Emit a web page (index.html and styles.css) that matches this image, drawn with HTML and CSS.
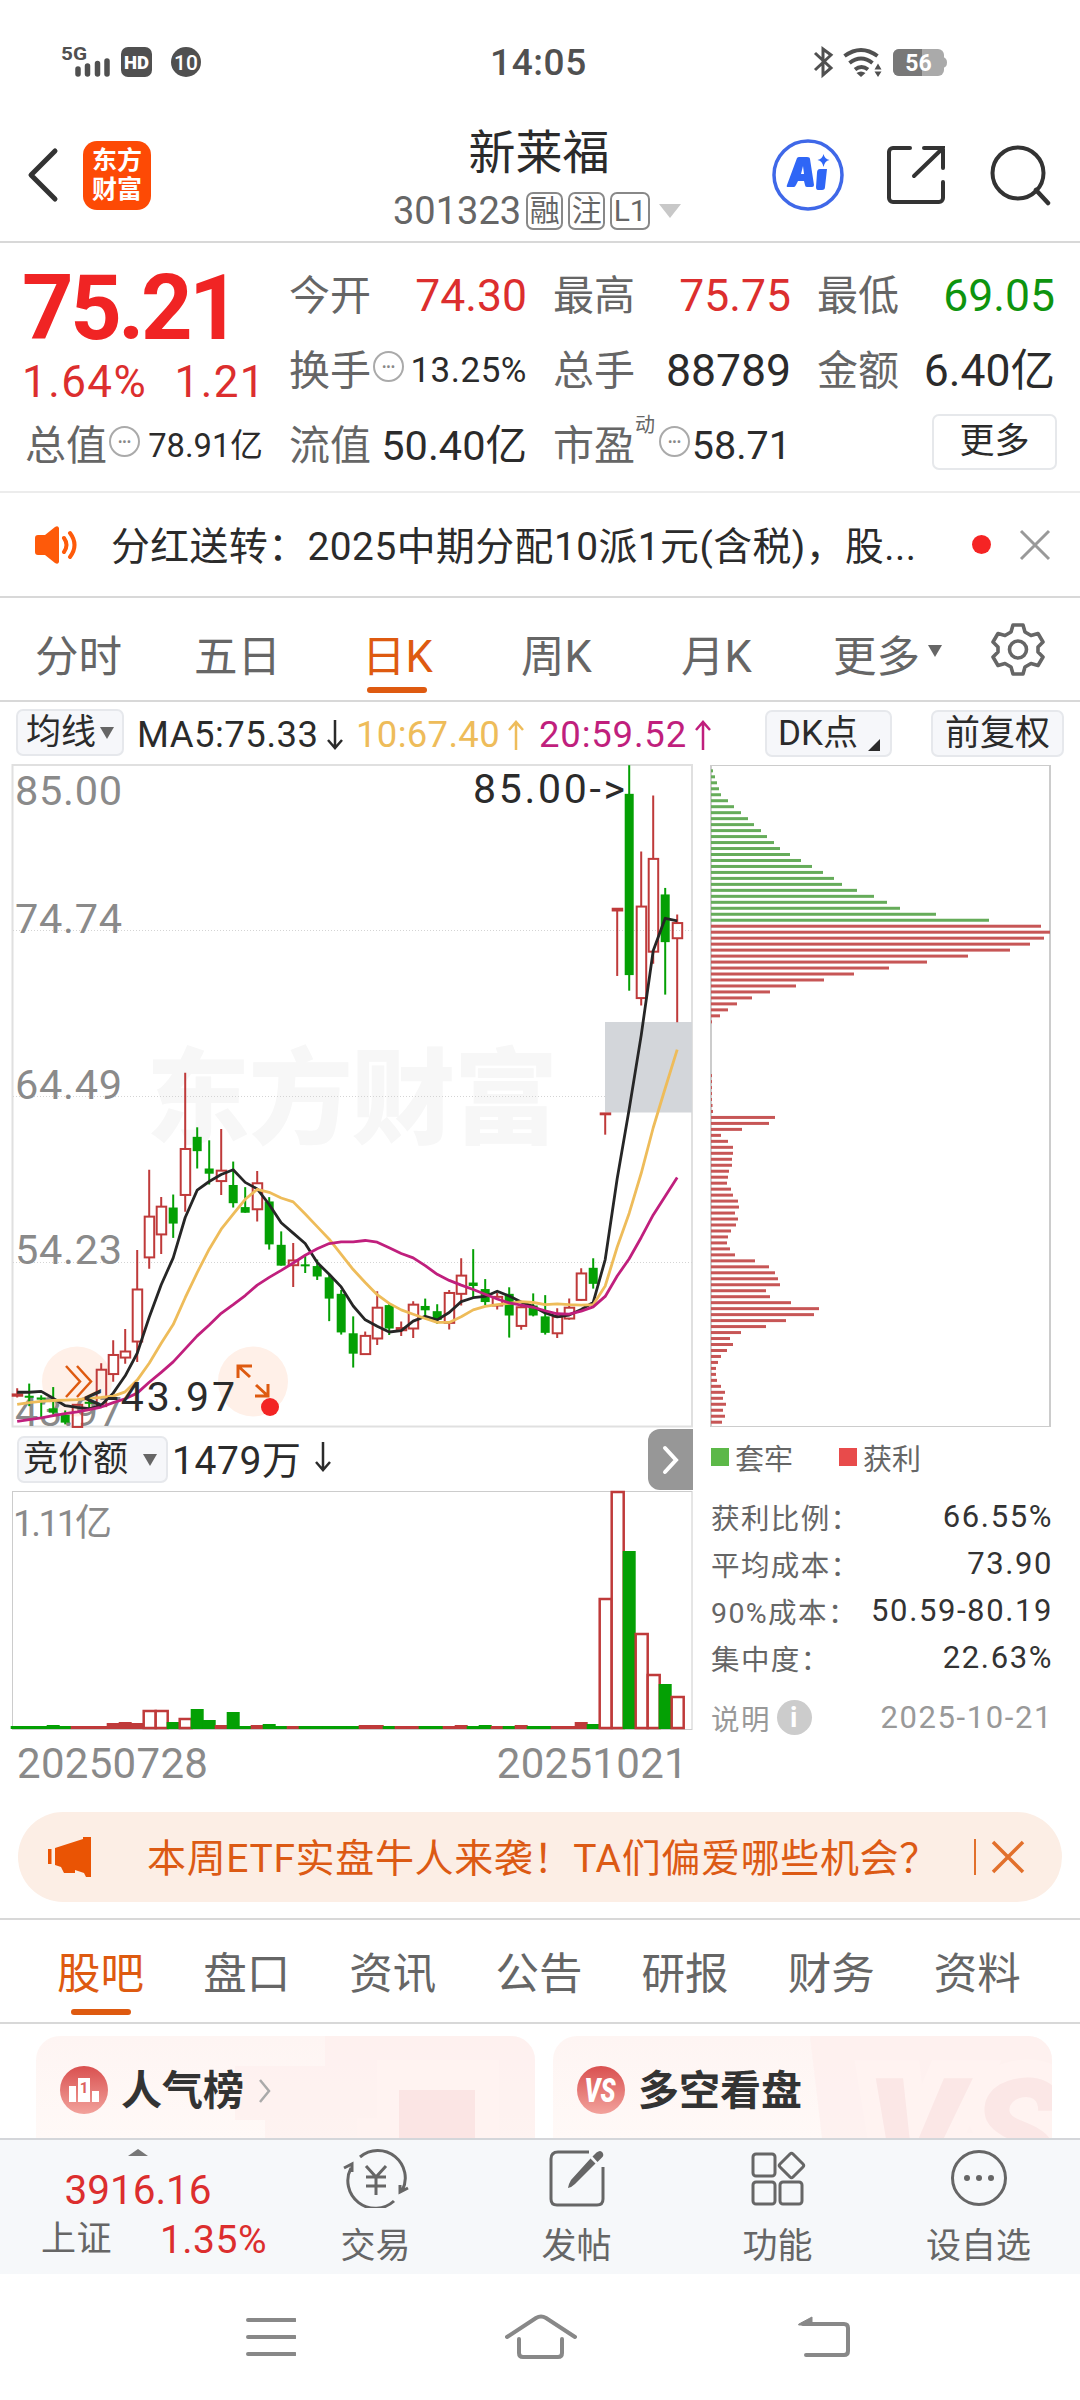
FILE: index.html
```
<!DOCTYPE html>
<html lang="zh-CN">
<head>
    <meta charset="UTF-8">
    <meta name="viewport" content="width=device-width, initial-scale=1.0">
    <title>新莱福 301323</title>
    <link rel="stylesheet" href="styles.css">
</head>
<body>
    <div class="status-bar">
        <svg class="status-left" width="150" height="40" viewBox="58 40 150 40">
            <text x="61" y="60" font-size="19" font-weight="700" textLength="26" lengthAdjust="spacingAndGlyphs">5G</text>
            <path d="M78 69v5M87.500 66v8M97.500 63.500v10.500M107 61v13" stroke="#505050" stroke-width="5.500" stroke-linecap="round"/>
            <rect x="121" y="47" width="31" height="30" rx="7"/>
            <text x="136.500" y="69" class="inv" font-size="19" font-weight="900" text-anchor="middle" textLength="25" lengthAdjust="spacingAndGlyphs">HD</text>
            <circle cx="186" cy="62" r="15"/>
            <text x="186" y="69.500" class="inv" font-size="21" font-weight="500" text-anchor="middle">10</text>
        </svg>
        <span class="clock">14:05</span>
        <svg class="status-right" width="140" height="40" viewBox="811 40 140 40">
            <path d="M815 53l16 15-8 7V49l8 6-16 15" fill="none" stroke="#505050" stroke-width="3"/>
            <path d="M844.500 56q16.500-12 33 0M849.500 63q11.500-9 23 0M855 69.500q6.500-5 13 0" fill="none" stroke="#505050" stroke-width="4"/>
            <path d="M856.500 73q4.500-3 9 0l-4.500 4zM874.500 69.500l3.500-6 3.500 6zM874.500 71.500h7l-3.500 5.500z"/>
            <rect x="893" y="49" width="51" height="27" rx="6" fill="#aaa"/>
            <path d="M922 49h-23a6 6 0 0 0-6 6v15a6 6 0 0 0 6 6h23z" fill="#787878"/>
            <path d="M943 57q4 1 4 5.500t-4 5.500z" fill="#aaa"/>
            <text x="918.500" y="71" class="inv" font-size="23" font-weight="700" text-anchor="middle">56</text>
        </svg>
    </div>

    <div class="header">
        <div class="header-left">
            <svg width="32" height="56" viewBox="0 0 32 56"><path d="M28 4L4 28l24 24" fill="none" stroke="#333" stroke-width="5" stroke-linecap="round" stroke-linejoin="round"/></svg>
            <div class="app-logo">东方<br>财富</div>
        </div>
        <div class="stock-title">
            <div class="stock-name">新莱福</div>
            <div class="stock-code">301323<span class="mark">融</span><span class="mark">注</span><span class="mark wide">L1</span><i class="drop"></i></div>
        </div>
        <div class="header-right">
            <svg width="74" height="74" viewBox="0 0 74 74">
                <circle cx="37" cy="37" r="34" fill="none" stroke="#3f68e8" stroke-width="3.500"/>
                <path d="M26 20q1-1 2-1h8q3 0 3 2l4 26q0 2-2 2h-5q-2 0-2-2l-1-4h-6l-2 4q-1 2-2 2h-6q-2 0-1-2zM30 36h3l-1-8zM49 31h7l-2 18q0 3-3 3h-4q-2 0-2-3l1-14q0-4 3-4zM52.500 16q1 5 6 6-5 1-6 7-1-6-6-7 5-1 6-6z" fill="#2f66f6"/>
            </svg>
            <svg width="62" height="62" viewBox="0 0 62 62"><path d="M24 4H7a4 4 0 0 0-4 4v46a4 4 0 0 0 4 4h46a4 4 0 0 0 4-4V38M38 4h19v20M57 4L28 32" fill="none" stroke="#333" stroke-width="4" stroke-linecap="round"/></svg>
            <svg width="62" height="64" viewBox="0 0 62 64"><circle cx="29" cy="30" r="25.500" fill="none" stroke="#333" stroke-width="4"/><path d="M47 47l12 13" stroke="#333" stroke-width="4.500" stroke-linecap="round"/></svg>
        </div>
    </div>

    <div class="quote">
        <div class="price-box">
            <div class="price">75.21</div>
            <div class="change"><span>1.64%</span><span>1.21</span></div>
        </div>
        <div class="cell"><label>今开</label><b class="up">74.30</b></div>
        <div class="cell"><label>最高</label><b class="up">75.75</b></div>
        <div class="cell"><label>最低</label><b class="down">69.05</b></div>
        <div class="cell"><label>换手</label><i class="dots">•••</i><b class="small wide">13.25%</b></div>
        <div class="cell"><label>总手</label><b>88789</b></div>
        <div class="cell"><label>金额</label><b>6.40亿</b></div>
        <div class="cell"><label>总值</label><i class="dots">•••</i><b class="small">78.91亿</b></div>
        <div class="cell"><label>流值</label><b class="mid">50.40亿</b></div>
        <div class="cell"><label>市盈</label><sup>动</sup><i class="dots">•••</i><b class="pe">58.71</b></div>
        <div class="cell"><button class="more">更多</button></div>
    </div>

    <div class="notice">
        <svg width="46" height="38" viewBox="0 0 46 38">
            <path d="M2 12q0-3 3-3h7L22 1q3-2 4 1v34q-1 3-4 1l-10-8H5q-3 0-3-3z" fill="#fe5a0a"/>
            <path d="M31 12q5 7 0 14M37 7q9 12 0 24" fill="none" stroke="#fe5a0a" stroke-width="4" stroke-linecap="round"/>
        </svg>
        <span class="notice-text">分红送转：2025中期分配10派1元(含税)，股...</span>
        <i class="red-dot"></i>
        <svg width="32" height="32" viewBox="0 0 32 32"><path d="M2 2l28 28M30 2L2 30" stroke="#999" stroke-width="3"/></svg>
    </div>

    <div class="period-tabs">
        <span>分时</span><span>五日</span><span class="active">日K</span><span>周K</span><span>月K</span><span>更多<i class="tri"></i></span>
        <svg class="gear" width="54" height="54" viewBox="0 0 54 54" fill="none" stroke="#666" stroke-width="3.600" stroke-linejoin="round">
            <path d="M22 3h10l2 7 6 3.500 7-2 5 8.500-5 5v5l5 5-5 8.500-7-2-6 3.500-2 7H22l-2-7-6-3.500-7 2L2 35l5-5v-5l-5-5 5-8.500 7 2 6-3.500z"/>
            <circle cx="27" cy="27.500" r="8.500"/>
        </svg>
    </div>

    <div class="indicators">
        <span class="chip ma-btn">均线<i class="tri"></i></span>
        <span class="ma5">MA5:75.33<svg class="arrow" viewBox="0 0 18 32"><path d="M9 1v28M2 21l7 8 7-8"/></svg></span>
        <span class="ma10">10:67.40<svg class="arrow" viewBox="0 0 18 32"><path d="M9 31V3M2 11l7-8 7 8"/></svg></span>
        <span class="ma20">20:59.52<svg class="arrow" viewBox="0 0 18 32"><path d="M9 31V3M2 11l7-8 7 8"/></svg></span>
        <span class="chip dk-btn">DK点<i class="corner"></i></span>
        <span class="chip fq-btn">前复权</span>
    </div>

    <div class="charts">
        <div class="chart-main">
            <svg id="kline" width="700" height="668" viewBox="0 760 700 668"></svg>
            <div class="vol-head">
                <span class="chip vol-btn">竞价额<i class="tri"></i></span>
                <span class="vol-value">1479万<svg class="arrow" viewBox="0 0 18 32"><path d="M9 1v28M2 21l7 8 7-8"/></svg></span>
                <span class="next"><svg width="20" height="32" viewBox="0 0 20 32"><path d="M4 4l11 12L4 28" fill="none" stroke="#fff" stroke-width="4" stroke-linecap="round"/></svg></span>
            </div>
            <svg id="volume" width="700" height="242" viewBox="0 1490 700 242"></svg>
            <div class="dates"><span>20250728</span><span>20251021</span></div>
        </div>
        <div class="chart-side">
            <svg id="chips" width="352" height="668" viewBox="700 760 352 668"></svg>
            <div class="legend"><i class="sq green"></i>套牢<i class="sq red"></i>获利</div>
            <div class="stats">
                <div class="stat"><span>获利比例：</span><b>66.55%</b></div>
                <div class="stat"><span>平均成本：</span><b>73.90</b></div>
                <div class="stat"><span>90%成本：</span><b>50.59-80.19</b></div>
                <div class="stat"><span>集中度：</span><b>22.63%</b></div>
                <div class="stat note"><span>说明<i class="info">i</i></span><b>2025-10-21</b></div>
            </div>
        </div>
    </div>

    <div class="banner">
        <svg width="46" height="42" viewBox="0 0 46 42"><path d="M1 13h3.500v15H1zM8 12L36 3V1h8v40h-5l-2-4-9-3v3h-11l-3-6-6-2z" fill="#ea5404"/></svg>
        <span class="banner-text">本周ETF实盘牛人来袭！TA们偏爱哪些机会？</span>
        <i class="bar"></i>
        <svg width="34" height="34" viewBox="0 0 34 34"><path d="M2 2l30 30M32 2L2 32" stroke="#e2702c" stroke-width="3.500"/></svg>
    </div>

    <div class="info-tabs">
        <span class="active">股吧</span><span>盘口</span><span>资讯</span><span>公告</span><span>研报</span><span>财务</span><span>资料</span>
    </div>

    <div class="cards">
        <div class="card">
            <svg class="card-bg" width="300" height="102" viewBox="0 0 300 102"><path d="M90 0h210v102H30V84H0V30h90z" fill="#feefed" opacity=".6"/><path d="M142 24h122v78H122V82h20z" fill="#fff3f1"/><path d="M164 54h76v48h-76z" fill="#fbe5e4"/></svg>
            <svg width="48" height="48" viewBox="0 0 48 48">
                <defs><linearGradient id="badge" x2="0" y2="1"><stop offset="0" stop-color="#d9504f"/><stop offset="1" stop-color="#f2a29c"/></linearGradient></defs>
                <circle cx="24" cy="24" r="24" fill="url(#badge)"/>
                <path d="M9 20h7v16H9zM18 12h12v24H18zM32 25h7v11h-7z" fill="#fff"/>
                <text x="24" y="27" font-size="15" font-weight="700" fill="#dd6260" text-anchor="middle">1</text>
            </svg>
            <span>人气榜</span>
            <svg width="16" height="26" viewBox="0 0 16 26"><path d="M3 2l9 11-9 11" fill="none" stroke="#aaa" stroke-width="2.500"/></svg>
        </div>
        <div class="card">
            <svg class="card-bg" width="242" height="102" viewBox="0 0 242 102"><path d="M0 0h242v102H12z" fill="#feefed" opacity=".75"/><text class="vs" x="56" y="149" textLength="196">VS</text></svg>
            <svg width="48" height="48" viewBox="0 0 48 48">
                <circle cx="24" cy="24" r="24" fill="url(#badge)"/>
                <text x="23" y="36" font-size="33" font-weight="900" font-style="italic" fill="#fff" text-anchor="middle" textLength="31" lengthAdjust="spacingAndGlyphs">VS</text>
            </svg>
            <span>多空看盘</span>
        </div>
    </div>

    <div class="toolbar">
        <div class="index">
            <i class="up-tri"></i>
            <div class="index-value">3916.16</div>
            <div class="index-row"><span>上证</span><b>1.35%</b></div>
        </div>
        <div class="tool">
            <svg width="68" height="60" viewBox="0 0 68 60" fill="none" stroke="#666" stroke-width="3">
                <path d="M18 9A27.500 27.500 0 0 1 60 43M52 53A27.500 27.500 0 0 1 9 20M2 20l8-4v8M66 40l-8 4v-7"/>
                <path d="M24 18l10 11 10-11M34 29v18M24 29h20M24 38h20"/>
            </svg>
            <span>交易</span>
        </div>
        <div class="tool">
            <svg width="60" height="60" viewBox="0 0 60 60">
                <path d="M42 4H11q-7 0-7 7v40q0 6 6 6h40q6 0 6-6V19" fill="none" stroke="#666" stroke-width="3"/>
                <path d="M43.500 10.500l5 5L28 36q-3 3-7 4 1-5 3-8zM45.500 8.500l4-4q4-3 6 0 2 3-1 5.500l-4 4z" fill="#666"/>
            </svg>
            <span>发帖</span>
        </div>
        <div class="tool">
            <svg width="60" height="60" viewBox="0 0 60 60" fill="none" stroke="#666" stroke-width="3">
                <rect x="5" y="6" width="22" height="22" rx="3"/><rect x="5" y="34" width="22" height="22" rx="3"/><rect x="32" y="34" width="22" height="22" rx="3"/>
                <path d="M42 6q1.500-1.500 3 0l10 10q1.500 1.500 0 3l-10 10q-1.500 1.500-3 0l-10-10q-1.500-1.500 0-3z"/>
            </svg>
            <span>功能</span>
        </div>
        <div class="tool">
            <svg width="60" height="60" viewBox="0 0 60 60"><circle cx="30" cy="30" r="26.500" fill="none" stroke="#666" stroke-width="3"/><circle cx="18" cy="30" r="3" fill="#666"/><circle cx="30" cy="30" r="3" fill="#666"/><circle cx="42" cy="30" r="3" fill="#666"/></svg>
            <span>设自选</span>
        </div>
    </div>

    <div class="nav-bar">
        <svg width="50" height="46" viewBox="0 0 50 46"><path d="M2 6h47M2 23h47M2 40h47"/></svg>
        <svg class="home" width="72" height="46" viewBox="0 0 72 46"><path d="M2 23L31 4q5-3 10 0l29 19M14 25v14q0 4 4 4h35q4 0 4-4V25"/></svg>
        <svg width="54" height="46" viewBox="0 0 54 46"><path d="M9 41h38q4 0 4-4V14q0-4-4-4H6"/><path d="M2 10L15 3v8H2z" fill="#888" stroke-width="1"/></svg>
    </div>

    <script src="chart.js"></script>
</body>
</html>
```
FILE: styles.css
```
* {
    box-sizing: border-box;
}
body {
    margin: 0;
    width: 1080px;
    height: 2400px;
    overflow: hidden;
    background: #fff;
    color: #2b2b2b;
    font-family: Roboto, "Noto Sans CJK SC", sans-serif;
}
svg {
    display: block;
    flex: none;
}
i {
    font-style: normal;
}
b {
    font-weight: 400;
}

/* status bar */
.status-bar {
    height: 100px;
    padding: 40px 129px 0 58px;
    display: flex;
    fill: #505050;
}
.status-bar .inv {
    fill: #fff;
}
.clock {
    width: 603px;
    padding-left: 282px;
    font-size: 37px;
    font-weight: 500;
    line-height: 45px;
    letter-spacing: 0.6px;
    color: #505050;
}

/* header */
.header {
    height: 143px;
    border-bottom: 2px solid #d8d8d8;
    display: grid;
    grid-template-columns: 393px 1fr 310px;
}
.header-left {
    display: flex;
    align-items: center;
    gap: 24px;
    padding: 9px 0 0 27px;
}
.app-logo {
    width: 68px;
    height: 69px;
    border-radius: 14px;
    background: #fd4a05;
    color: #fff;
    font-size: 25px;
    font-weight: 700;
    line-height: 29px;
    text-align: center;
    padding-top: 5px;
}
.stock-title {
    padding-top: 23px;
}
.stock-name {
    width: 292px;
    font-size: 47px;
    line-height: 60px;
    text-align: center;
}
.stock-code {
    display: flex;
    align-items: center;
    height: 56px;
    font-size: 38px;
    color: #666;
}
.mark {
    width: 37px;
    height: 38px;
    margin-left: 5px;
    border: 2px solid #888;
    border-radius: 7px;
    font-size: 30px;
    line-height: 33px;
    text-align: center;
}
.mark.wide {
    width: 40px;
}
.drop {
    margin-left: 9px;
    border: 11px solid transparent;
    border-top: 14px solid #c8c8c8;
    border-bottom: 0;
}
.header-right {
    display: flex;
    align-items: center;
    gap: 41px;
    padding: 9px 0 0 1px;
}

/* quote */
.quote {
    height: 250px;
    padding: 15px 25px 0;
    border-bottom: 2px solid #ececec;
    display: grid;
    grid-template-columns: repeat(4, 238px);
    grid-template-rows: repeat(3, 75px);
    column-gap: 26px;
}
.price-box {
    grid-row: span 2;
    color: #f02424;
}
.price {
    height: 100px;
    margin-left: -3px;
    font-size: 90px;
    font-weight: 700;
    line-height: 101px;
    letter-spacing: -3.5px;
}
.change {
    display: flex;
    justify-content: space-between;
    margin: 0 -3px 0 -3px;
    font-size: 44px;
    line-height: 48px;
    letter-spacing: 1.4px;
    color: #dc2e2e;
}
.cell {
    display: flex;
    align-items: center;
    font-size: 41px;
    line-height: 60px;
    white-space: nowrap;
}
.cell label {
    color: #666;
}
.cell b {
    margin-left: auto;
    font-size: 44.5px;
}
.cell b.small {
    font-size: 32.7px;
}
.cell b.small.wide {
    font-size: 35px;
    letter-spacing: 0.5px;
}
.cell b.mid {
    font-size: 41.5px;
}
.cell b.pe {
    font-size: 39.5px;
}
.cell .up {
    color: #dc2e2e;
}
.cell .down {
    color: #0e940e;
}
.cell sup {
    width: 22px;
    margin-top: -42px;
    font-size: 20px;
    line-height: 24px;
    color: #666;
}
.dots {
    width: 31px;
    height: 31px;
    margin: -9px 0 0 2px;
    border: 2px solid #aaa;
    border-radius: 50%;
    font-size: 13px;
    line-height: 27px;
    text-align: center;
    color: #888;
}
.more {
    width: 125px;
    height: 56px;
    margin: -7px -2px 0 auto;
    border: 2px solid #e6e8eb;
    border-radius: 7px;
    background: #fff;
    font: 35px/50px Roboto, "Noto Sans CJK SC", sans-serif;
    color: #2b2b2b;
}

/* notice */
.notice {
    height: 105px;
    padding: 0 29px 0 33px;
    border-bottom: 2px solid #d8d8d8;
    display: flex;
    align-items: center;
}
.notice-text {
    margin: -3px 0 0 32px;
    font-size: 38.8px;
    letter-spacing: 0.5px;
    white-space: nowrap;
}
.red-dot {
    width: 19px;
    height: 19px;
    margin: 0 28px 0 auto;
    border-radius: 50%;
    background: #f52424;
}

/* k-line period tabs */
.period-tabs {
    height: 104px;
    padding-left: 35px;
    border-bottom: 2px solid #d8d8d8;
    display: flex;
    font-size: 43.5px;
    color: #666;
}
.period-tabs span {
    display: flex;
    align-items: center;
    width: 159px;
    padding-top: 8px;
}
.period-tabs span:nth-child(3) {
    padding-left: 9px;
}
.period-tabs span:nth-child(4) {
    padding-left: 9px;
}
.period-tabs span:nth-child(5) {
    padding-left: 10px;
}
.period-tabs span:nth-child(6) {
    padding-left: 3px;
}
.period-tabs .gear {
    margin: 24px 0 0 2px;
}
.period-tabs .tri {
    margin-top: -5px;
}
.period-tabs .active,
.info-tabs .active {
    position: relative;
    color: #de5a10;
}
.active::after {
    content: "";
    position: absolute;
    left: 14px;
    bottom: 7px;
    width: 60px;
    height: 6px;
    border-radius: 3px;
    background: #de5a10;
}
.tri {
    margin-left: 8px;
    border: 7.5px solid transparent;
    border-top: 12px solid #666;
    border-bottom: 0;
}

/* indicator row */
.indicators {
    height: 58px;
    padding: 7px 16px 0;
    display: flex;
    font-size: 36.5px;
    line-height: 49px;
    white-space: nowrap;
}
.indicators > span {
    display: flex;
    align-items: center;
}
.indicators .chip {
    line-height: 43px;
}
.chip {
    display: flex;
    align-items: center;
    height: 47px;
    border: 2px solid #e6e8ec;
    border-radius: 7px;
    background: #f6f7fa;
    font-size: 35px;
}
.arrow {
    width: 18px;
    height: 32px;
    margin-left: 7px;
    fill: none;
    stroke: currentColor;
    stroke-width: 2.5;
}
.ma-btn {
    width: 108px;
    padding-left: 8px;
}
.ma-btn .tri {
    margin-left: 4px;
}
.ma5 {
    width: 219px;
    margin-left: 13px;
    letter-spacing: 0.5px;
}
.ma10 {
    width: 183px;
    letter-spacing: 0.3px;
    color: #eebc5a;
}
.ma20 {
    width: 226px;
    letter-spacing: 0.8px;
    color: #c01f7d;
}
.dk-btn {
    width: 127px;
    margin-top: 1px;
    padding-left: 11px;
}
.corner {
    margin: 22px 0 0 10px;
    border-left: 12px solid transparent;
    border-bottom: 12px solid #2b2b2b;
}
.fq-btn {
    width: 133px;
    margin: 1px 0 0 39px;
    justify-content: center;
}

/* charts */
.charts {
    height: 1046px;
    display: flex;
}
.chart-main {
    width: 700px;
}
.vol-head {
    height: 62px;
    padding-left: 17px;
    display: flex;
    align-items: flex-start;
}
.vol-btn {
    width: 151px;
    margin-top: 8px;
    padding-left: 4px;
    line-height: 42px;
}
.vol-btn .tri {
    margin-left: 15px;
}
.vol-value {
    display: flex;
    align-items: center;
    height: 58px;
    padding-left: 4px;
    font-size: 39px;
    letter-spacing: 0.6px;
}
.vol-value .arrow {
    margin-left: 12px;
}
.next {
    width: 45px;
    height: 61px;
    margin: 1px 7px 0 auto;
    border-radius: 12px 0 0 12px;
    background: #979797;
    display: flex;
    align-items: center;
    justify-content: center;
}
.dates {
    padding: 4px 12px 0 17px;
    display: flex;
    justify-content: space-between;
    font-size: 42px;
    line-height: 56px;
    letter-spacing: 0.3px;
    color: #8a8a8a;
}
.chart-side {
    width: 352px;
}
.legend {
    height: 58px;
    padding-left: 11px;
    display: flex;
    align-items: center;
    font-size: 29px;
    color: #666;
}
.sq {
    width: 18px;
    height: 18px;
    margin-right: 6px;
}
.sq.green {
    background: #5cb848;
}
.sq.red {
    margin-left: 46px;
    background: #e84b4b;
}
.stats {
    padding: 7px 1px 0 11px;
}
.stat {
    display: flex;
    justify-content: space-between;
    align-items: center;
    height: 47px;
    font-size: 28.5px;
    color: #666;
    white-space: nowrap;
}
.stat span {
    display: flex;
    align-items: center;
    letter-spacing: 1.4px;
}
.stat b {
    margin-right: -2px;
    font-size: 31px;
    letter-spacing: 1.6px;
    color: #333;
}
.stat.note {
    margin-top: 13px;
    color: #999;
}
.note b {
    color: #999;
}
.info {
    width: 35px;
    height: 35px;
    margin-left: 6px;
    border-radius: 50%;
    background: #ccc;
    color: #fff;
    font-size: 28px;
    font-weight: 700;
    line-height: 35px;
    text-align: center;
}
.grid {
    stroke: #d4d4d4;
    stroke-dasharray: 1 2;
}
.axis {
    font-size: 41.5px;
    fill: #8a8a8a;
}
.tip {
    font-size: 41px;
    fill: #2b2b2b;
}
.watermark {
    font-size: 104px;
    font-weight: 900;
    fill: #f7f7f7;
}

/* promo banner */
.banner {
    height: 90px;
    margin: 6px 18px 16px;
    padding: 0 37px 0 29px;
    border-radius: 45px;
    background: #fceee5;
    color: #dc5a14;
    display: flex;
    align-items: center;
}
.banner-text {
    margin: -4px 0 0 54px;
    font-size: 39px;
    letter-spacing: 0.65px;
    white-space: nowrap;
}
.bar {
    width: 2px;
    height: 36px;
    margin: 0 15px 0 auto;
    background: #e2702c;
}

/* info tabs */
.info-tabs {
    height: 106px;
    padding-left: 57px;
    border-top: 2px solid #d8d8d8;
    border-bottom: 2px solid #d8d8d8;
    display: flex;
    font-size: 43.5px;
    line-height: 110px;
    color: #666;
}
.info-tabs span {
    width: 146.3px;
}

/* cards */
.cards {
    height: 114px;
    padding: 12px 28px 0 36px;
    display: flex;
    gap: 18px;
    overflow: hidden;
}
.card {
    position: relative;
    width: 499px;
    height: 102px;
    padding: 30px 0 0 24px;
    border-radius: 24px 24px 0 0;
    background: linear-gradient(#fef5f3, #fff9f7);
    display: flex;
    gap: 13px;
    overflow: hidden;
    font-size: 41px;
    font-weight: 700;
    line-height: 50px;
    color: #333;
}
.card > * {
    position: relative;
}
.card .card-bg {
    position: absolute;
    right: 0;
    top: 0;
}
.card svg:last-child {
    margin-top: 12px;
}
.vs {
    font-size: 150px;
    font-weight: 900;
    font-style: italic;
    fill: #fbe7e6;
    stroke: #fff3f1;
    stroke-width: 36px;
    paint-order: stroke;
}

/* toolbar */
.toolbar {
    height: 136px;
    border-top: 2px solid #d4d6da;
    background: #f6f8fa;
    display: flex;
    color: #666;
}
.index {
    width: 276px;
    display: flex;
    flex-direction: column;
    align-items: center;
    color: #dc2e2e;
}
.up-tri {
    margin: 9px 0 0;
    border: 10.5px solid transparent;
    border-bottom: 7px solid #777;
    border-top: 0;
}
.index-value {
    margin-top: 9px;
    font-size: 40.5px;
    line-height: 50px;
}
.index-row {
    align-self: stretch;
    padding: 0 9px 0 41px;
    display: flex;
    justify-content: space-between;
    font-size: 39px;
    line-height: 50px;
    letter-spacing: 0.5px;
}
.index-row span {
    font-size: 35px;
    color: #666;
}
.tool {
    width: 201px;
    display: flex;
    flex-direction: column;
    align-items: center;
    margin-left: -1px;
    margin-right: 1px;
    padding-top: 8px;
    font-size: 35px;
}
.tool span {
    margin-top: 14px;
    line-height: 50px;
}

/* system navigation */
.nav-bar {
    height: 126px;
    padding: 40px 229px 0 246px;
    display: flex;
    justify-content: space-between;
    fill: none;
    stroke: #888;
    stroke-width: 4;
    stroke-linecap: round;
}
.home {
    margin-right: 12px;
}
```
FILE: chart.js
```
const RED = '#bf3a3a';
const GREEN = '#04a004';

// x of the n-th candle, and vertical scale of the price area
const px = i => 17.2 + 12 * i;
const py = v => 760 + v / 2.306;

// colour, high, body top, body bottom, low
const candles = [
    ['r', 1449, 1463, 1466, 1470], ['g', 1438, 1466, 1470, 1490], ['g', 1465, 1470, 1475, 1515],
    ['g', 1446, 1495, 1505, 1510], ['g', 1500, 1510, 1528, 1532], ['r', 1485, 1487, 1538, 1538],
    ['g', 1475, 1480, 1484, 1494], ['r', 1391, 1406, 1490, 1490], ['r', 1338, 1372, 1416, 1434],
    ['r', 1312, 1364, 1378, 1392], ['r', 1130, 1221, 1341, 1388], ['r', 945, 1053, 1147, 1173],
    ['r', 1008, 1030, 1094, 1139], ['g', 1002, 1032, 1069, 1102], ['r', 721, 897, 1003, 1042],
    ['g', 847, 869, 902, 942], ['g', 877, 942, 954, 979], ['r', 851, 947, 971, 1003],
    ['g', 926, 980, 1022, 1032], ['g', 985, 1031, 1044, 1044], ['r', 948, 976, 1036, 1064],
    ['g', 1008, 1018, 1117, 1129], ['g', 1087, 1118, 1166, 1166], ['r', 1114, 1154, 1165, 1215],
    ['g', 1143, 1163, 1167, 1183], ['g', 1152, 1167, 1191, 1199], ['g', 1187, 1193, 1242, 1294],
    ['g', 1222, 1231, 1320, 1325], ['g', 1283, 1322, 1369, 1401], ['r', 1318, 1328, 1370, 1370],
    ['r', 1225, 1263, 1334, 1349], ['g', 1252, 1257, 1311, 1326], ['r', 1295, 1310, 1315, 1328],
    ['r', 1248, 1256, 1311, 1333], ['g', 1242, 1259, 1269, 1284], ['g', 1255, 1271, 1291, 1300],
    ['r', 1222, 1229, 1298, 1313], ['r', 1149, 1189, 1231, 1258], ['g', 1128, 1205, 1213, 1240],
    ['g', 1197, 1220, 1250, 1257], ['r', 1229, 1238, 1258, 1267], ['g', 1216, 1231, 1281, 1332],
    ['r', 1255, 1262, 1305, 1314], ['g', 1230, 1258, 1281, 1283], ['g', 1234, 1283, 1321, 1325],
    ['r', 1264, 1284, 1322, 1333], ['r', 1242, 1263, 1288, 1291], ['r', 1172, 1184, 1245, 1247],
    ['g', 1149, 1171, 1208, 1219], ['r', 815, 815, 817, 864], ['r', 343, 343, 347, 498],
    ['g', 12, 78, 496, 532], ['r', 211, 338, 549, 566], ['r', 82, 228, 442, 470],
    ['g', 295, 310, 420, 541], ['r', 356, 376, 411, 605]
];

const averages = [
    ['#262626', [1458, 1458, 1456, 1472, 1489, 1493, 1496, 1488, 1460, 1420, 1368, 1285, 1210, 1148, 1055, 992, 972, 956, 945, 974, 989, 1025, 1067, 1091, 1115, 1159, 1186, 1215, 1259, 1291, 1306, 1319, 1316, 1294, 1283, 1291, 1274, 1249, 1240, 1237, 1225, 1236, 1250, 1260, 1275, 1284, 1280, 1267, 1251, 1152, 965, 805, 635, 440, 365, 371]],
    ['#eebc5a', [1486, 1482, 1479, 1477, 1476, 1475, 1472, 1470, 1467, 1457, 1430, 1391, 1345, 1302, 1240, 1182, 1128, 1082, 1047, 1013, 990, 997, 1010, 1019, 1047, 1076, 1105, 1140, 1175, 1205, 1233, 1253, 1268, 1278, 1288, 1297, 1297, 1284, 1268, 1260, 1256, 1253, 1249, 1251, 1256, 1254, 1256, 1257, 1256, 1213, 1123, 1045, 953, 848, 757, 668]],
    ['#c01f7d', [1525, 1521, 1517, 1512, 1507, 1503, 1498, 1492, 1482, 1473, 1460, 1435, 1412, 1388, 1358, 1328, 1303, 1276, 1256, 1235, 1211, 1193, 1177, 1160, 1142, 1127, 1115, 1111, 1111, 1108, 1112, 1125, 1138, 1148, 1166, 1186, 1200, 1211, 1221, 1232, 1243, 1252, 1257, 1262, 1270, 1277, 1278, 1271, 1261, 1237, 1190, 1150, 1101, 1049, 1006, 963]]
];

// auction turnover: bar height in px, per candle
const volumes = 'g3 g3 g3 g4 g3 r3 r3 r3 r6 r7 r6 r19 r19 g7 r11 g20 g9 r4 g17 g3 r4 g5 g3 r3 g3 g3 g3 g3 g3 r4 r4 g3 r3 r3 g3 g3 r3 r4 g3 g4 r3 g3 r4 g3 g3 r3 r3 r7 g5 r131 r238 g178 r96 r55 g45 r33'.split(' ');

// chip distribution, top price first; the first 26 rows are above the current price
const chips = [2, 4, 6, 8, 10, 17, 23, 30, 37, 43, 50, 56, 63, 69, 79, 90, 101, 112, 123, 131, 146, 163, 176, 189, 225, 278,
    330, 339, 333, 319, 299, 257, 216, 178, 143, 113, 85, 59, 41, 26, 17, 9, 1, 0, 0, 0, 0, 0, 0, 0, 0,
    1, 1, 1, 1, 1, 1.5, 2, 64, 58, 31, 10, 17, 22, 22, 21, 21, 18, 17, 16, 20, 22, 27, 28, 24, 27, 25, 20, 17, 16, 19, 24,
    44, 58, 64, 67, 69, 55, 59, 80, 108, 103, 75, 55, 30, 19, 22, 16, 10, 7, 5, 5, 6, 10, 14, 12, 15, 12, 14, 11];

function drawKline() {
    let s = '<text class="watermark" x="146" y="1136" textLength="412">东方财富</text>';
    s += '<rect x="12.500" y="765" width="679.500" height="661.500" fill="none" stroke="#e0e0e0" stroke-width="2"/>';
    [930.5, 1096.5, 1262.5].forEach(y => {
        s += `<path class="grid" d="M13 ${y}H692"/>`;
    });
    s += '<rect x="605" y="1022" width="87" height="90.500" fill="#d3d6da"/>';
    s += '<circle cx="77" cy="1381.500" r="35" fill="#fff0e8"/><circle cx="253" cy="1381.500" r="35" fill="#fff0e8"/>';
    [['85.00', 804.5], ['74.74', 932.5], ['64.49', 1098.5], ['54.23', 1263.5], ['43.97', 1425.5]].forEach(([t, y]) => {
        s += `<text class="axis" x="15" y="${y}" textLength="107">${t}</text>`;
    });
    candles.forEach(([c, high, top, bottom, low], i) => {
        const x = px(i), y1 = py(top), y2 = py(bottom);
        const color = c === 'r' ? RED : GREEN;
        if (c === 'g') {
            s += `<path d="M${x} ${py(high)}V${py(low)}" stroke="${color}" stroke-width="2"/>`;
            s += `<rect x="${x - 4.5}" y="${y1}" width="9" height="${Math.max(y2 - y1, 2)}" fill="${color}"/>`;
        } else {
            s += `<path d="M${x} ${py(high)}V${y1}M${x} ${y2}V${py(low)}" stroke="${color}" stroke-width="2"/>`;
            s += `<rect x="${x - 4.5}" y="${y1}" width="9.500" height="${y2 - y1}" fill="none" stroke="${color}" stroke-width="2"/>`;
        }
    });
    averages.forEach(([color, points]) => {
        s += `<polyline points="${points.map((v, i) => px(i) + ',' + py(v)).join(' ')}" fill="none" stroke="${color}" stroke-width="2.800" stroke-linejoin="round"/>`;
    });
    s += '<text class="tip" x="473" y="802.500" textLength="152">85.00-&gt;</text>';
    s += '<text class="tip" x="83" y="1411" textLength="152">&lt;-43.97</text>';
    s += '<path d="M66 1366l14 15.500-14 15.500M77 1366l14 15.500-14 15.500" fill="none" stroke="#de5a10" stroke-width="2.500"/>';
    s += '<path d="M238 1378v-12h14M238 1366l12 11M256 1385l12 11M268 1384v12h-13" fill="none" stroke="#de5a10" stroke-width="3"/>';
    s += '<circle cx="270" cy="1407" r="9" fill="#f32424"/>';
    document.getElementById('kline').innerHTML = s;
}

function drawVolume() {
    const base = 1729;
    let s = '<rect x="12.500" y="1491.500" width="679.500" height="238" fill="none" stroke="#ccc"/>';
    s += '<text x="13" y="1535.500" font-size="37" fill="#8a8a8a" textLength="99">1.11亿</text>';
    volumes.forEach((v, i) => {
        const h = Number(v.slice(1)), x = px(i);
        if (v[0] === 'g' || h < 8) {
            s += `<rect x="${x - 6.5}" y="${base - h}" width="13" height="${h}" fill="${v[0] === 'g' ? GREEN : RED}"/>`;
        } else {
            s += `<rect x="${x - 5.5}" y="${base - h + 1}" width="12" height="${h - 2}" fill="#fff" stroke="${RED}" stroke-width="2.500"/>`;
        }
    });
    document.getElementById('volume').innerHTML = s;
}

function drawChips() {
    let s = '<path d="M711 765.500H1050M711 1426.500H1050" stroke="#ccc"/><path d="M711 765V1427M1050 765V1427" stroke="#ccc" stroke-width="2"/>';
    chips.forEach((w, i) => {
        s += `<rect x="711" y="${py(25 + 13.78 * i) - 1.5}" width="${w}" height="3" fill="${i < 26 ? '#66ac5a' : '#c75656'}"/>`;
    });
    document.getElementById('chips').innerHTML = s;
}

drawKline();
drawVolume();
drawChips();
```
